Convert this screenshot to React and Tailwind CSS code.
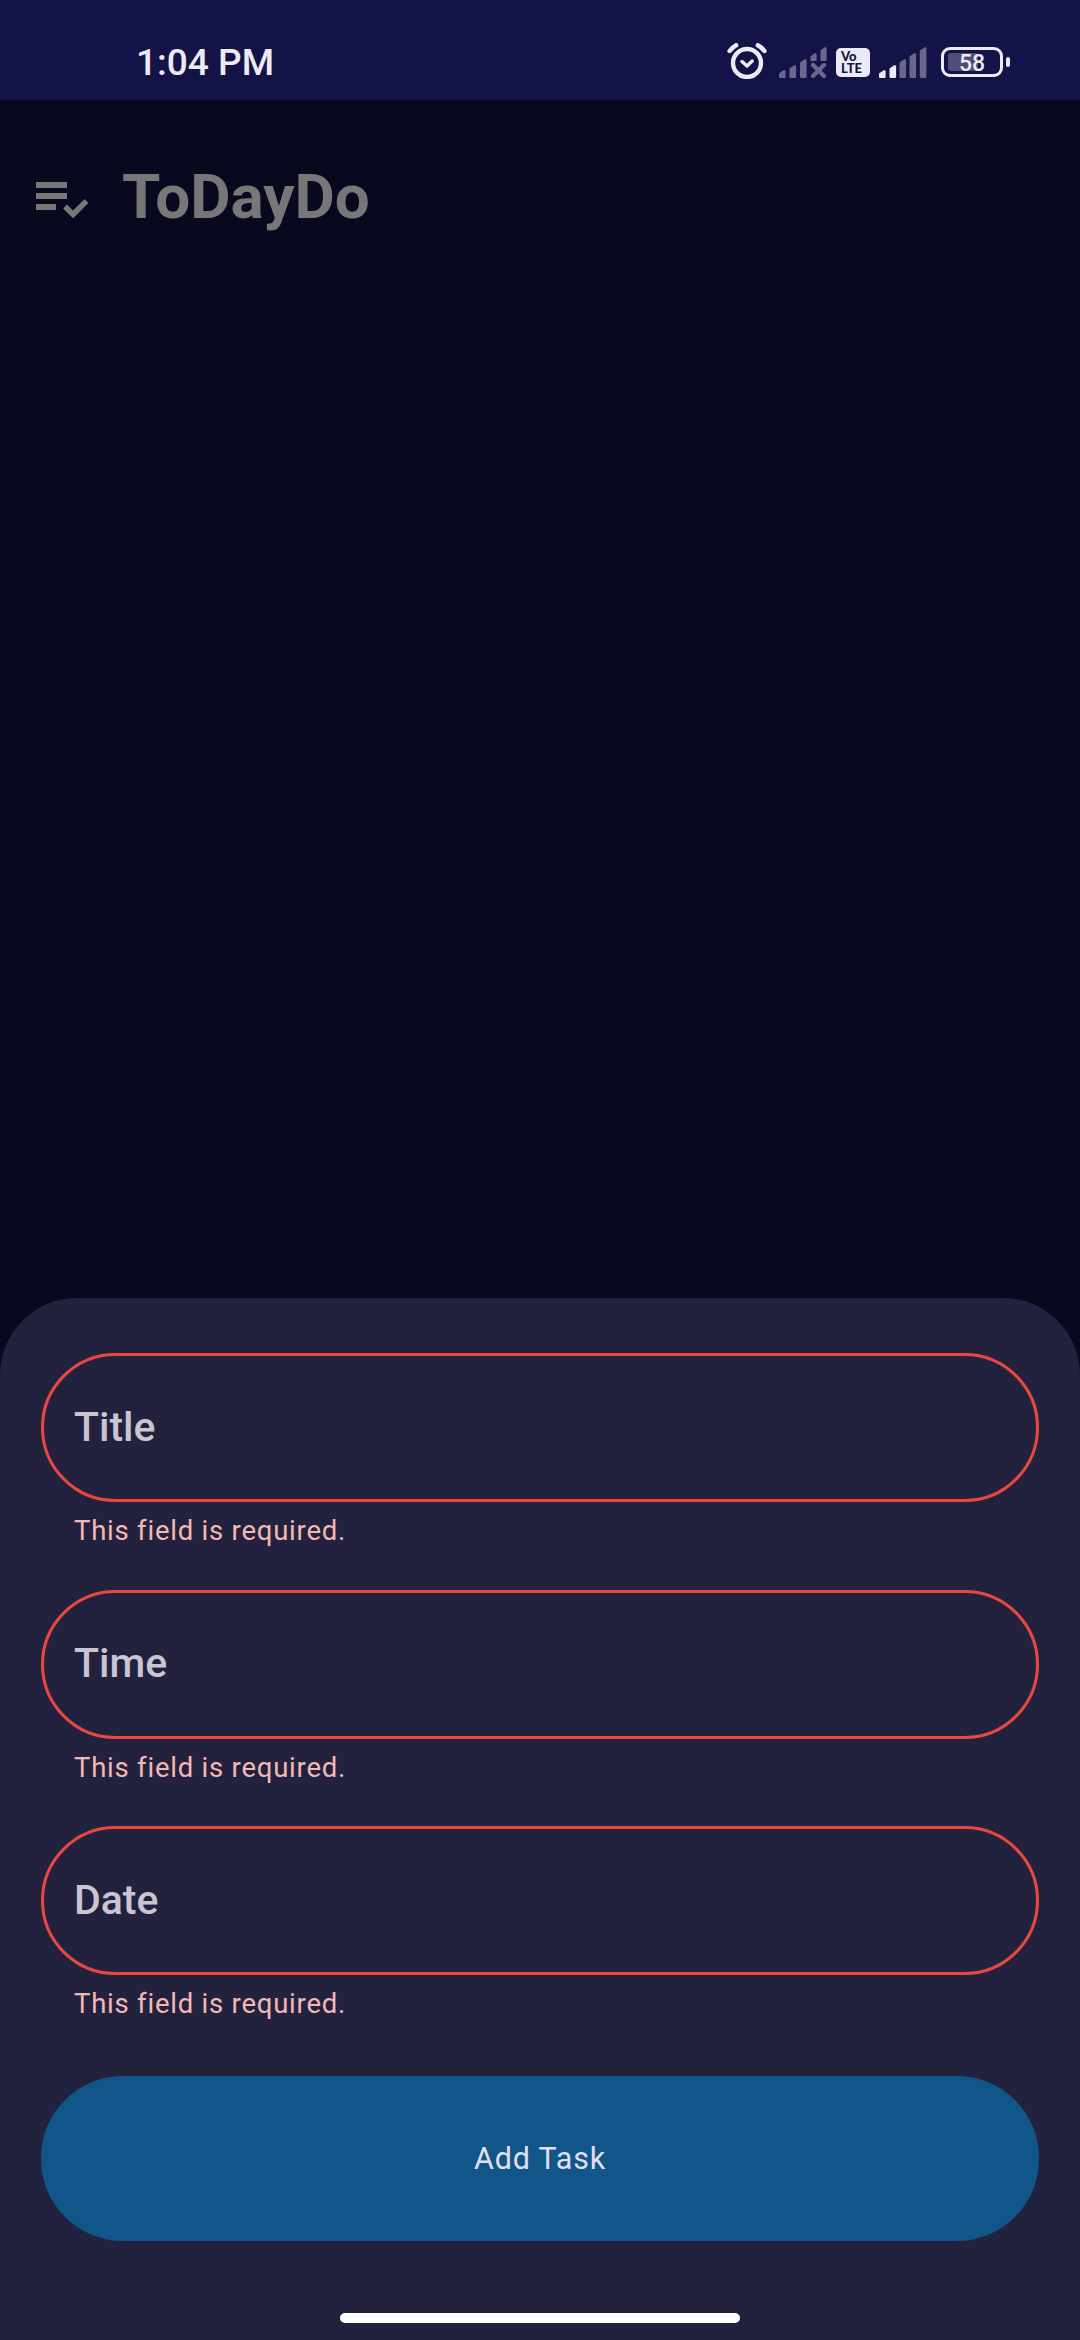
const dim = "#69678b";
const lit = "#eceaf4";

function AlarmIcon() {
  return (
    <svg className="h-9 w-10" viewBox="0 0 40 36" fill="none" stroke={lit} strokeLinecap="round">
      <circle cx="20" cy="20" r="14" strokeWidth="4.4" />
      <path d="M2.6 8Q5 4.400 9.200 2.200" strokeWidth="4.4" />
      <path d="M37.400 8Q35 4.400 30.800 2.200" strokeWidth="4.4" />
      <path d="M15 18.500l5 4.600 5.200-5" strokeWidth="3.4" strokeLinejoin="round" />
    </svg>
  );
}

function bar(x, top) {
  return `M${x} ${top + 3.5}L${x + 5} ${top}Q${x + 6.6} ${top} ${x + 6.6} ${top + 1.6}V30Q${x + 6.6} 31 ${x + 5.4} 31H${x + 1.2}Q${x} 31 ${x} 30Z`;
}

function NoSignalIcon() {
  return (
    <svg className="h-[31px] w-12" viewBox="0 0 48 31" fill={dim}>
      <path d={bar(0, 23)} />
      <path d={bar(10.5, 18)} />
      <path d={bar(21, 12)} />
      <path d="M31.500 9.500L36 6Q37.600 6 37.600 7.500V14H31.500Z" />
      <path d="M41.500 3.500L46 0Q47.600 0 47.600 1.500V14H41.500Z" />
      <path d="M34 18L45 29M45 18L34 29" stroke={dim} strokeWidth="4.2" strokeLinecap="round" />
    </svg>
  );
}

function SignalIcon() {
  return (
    <svg className="h-[31px] w-12" viewBox="0 0 48 31" fill={dim}>
      <path d={bar(0, 23)} fill={lit} />
      <path d={bar(10.5, 18)} fill={lit} />
      <path d={bar(20.5, 12)} />
      <path d={bar(30.5, 6)} />
      <path d={bar(40.8, 0)} />
    </svg>
  );
}

function Battery() {
  return (
    <div className="flex items-center gap-[3px]">
      <div className="relative flex h-[30px] w-[62px] items-center justify-center rounded-[9px] border-3 border-[#eceaf4]">
        <div className="absolute top-[3px] left-[4px] h-[18px] w-[30px] rounded-[3px] bg-[#504e76]" />
        <span className="relative mt-[3px] text-[23px] leading-6 font-medium text-[#eceaf4]">58</span>
      </div>
      <div className="h-[10px] w-1 rounded-xs bg-[#eceaf4]" />
    </div>
  );
}

function StatusBar() {
  return (
    <header className="flex h-[100px] shrink-0 justify-between bg-[#141347] pt-[40px] pr-[70px] pl-[136px] text-[#eceaf4]">
      <div className="mt-px h-11 text-[37px] leading-[44px] font-medium">1:04 PM</div>
      <div className="flex items-start">
        <div className="mt-[3px]"><AlarmIcon /></div>
        <div className="mt-[7px] ml-[12px]"><NoSignalIcon /></div>
        <div className="mt-2 ml-[9px] flex h-[29px] w-[34px] flex-col items-start rounded-[5px] bg-[#eceaf4] pt-[2px] pl-[5px] font-['Lato',sans-serif] text-[13px] leading-[12px] font-black text-[#141347]">
          <span>Vo</span>
          <span>LTE</span>
        </div>
        <div className="mt-[7px] ml-[9px]"><SignalIcon /></div>
        <div className="mt-[7px] ml-[14px]"><Battery /></div>
      </div>
    </header>
  );
}

function TaskListIcon() {
  return (
    <svg className="h-9 w-[53px]" viewBox="0 0 53 36" fill="#777">
      <path d="M0 0H31V6H0ZM0 11H31V17H0ZM0 22H20V28H0Z" />
      <path d="M29 24.500L37 32.500L50.500 19" fill="none" stroke="#777" strokeWidth="5.500" />
    </svg>
  );
}

function Field({ label }) {
  return (
    <div className="h-[236.500px]">
      <div className="flex h-[149px] items-center rounded-full border-3 border-[#e84840] pl-[30px] text-[41px] font-medium text-[#cac5d2]">
        {label}
      </div>
      <div className="mt-[11px] pl-[33px] text-[27.500px] leading-9 tracking-[0.77px] text-[#f2b8b5]">
        This field is required.
      </div>
    </div>
  );
}

export default function App() {
  return (
    <div className="flex h-[2340px] w-[1080px] flex-col overflow-hidden bg-[#08081e] font-['Roboto',sans-serif]">
      <StatusBar />
      <div className="flex h-[1198px] items-start pl-9">
        <div className="mt-[82px]"><TaskListIcon /></div>
        <h1 className="mt-[60px] ml-[33px] text-[62px] leading-[74px] font-bold text-[#777]">ToDayDo</h1>
      </div>
      <main className="flex flex-1 flex-col rounded-t-[77px] bg-[#23223e] px-[41px] pt-[55px]">
        <Field label="Title" />
        <Field label="Time" />
        <Field label="Date" />
        <button className="mt-[13.500px] h-[165px] rounded-[82px] bg-[#105688] pt-px text-[30.500px] tracking-[0.8px] text-[#e0def0]">
          Add Task
        </button>
        <div className="mt-[72px] h-[10px] w-[400px] self-center rounded-full bg-white" />
      </main>
    </div>
  );
}
